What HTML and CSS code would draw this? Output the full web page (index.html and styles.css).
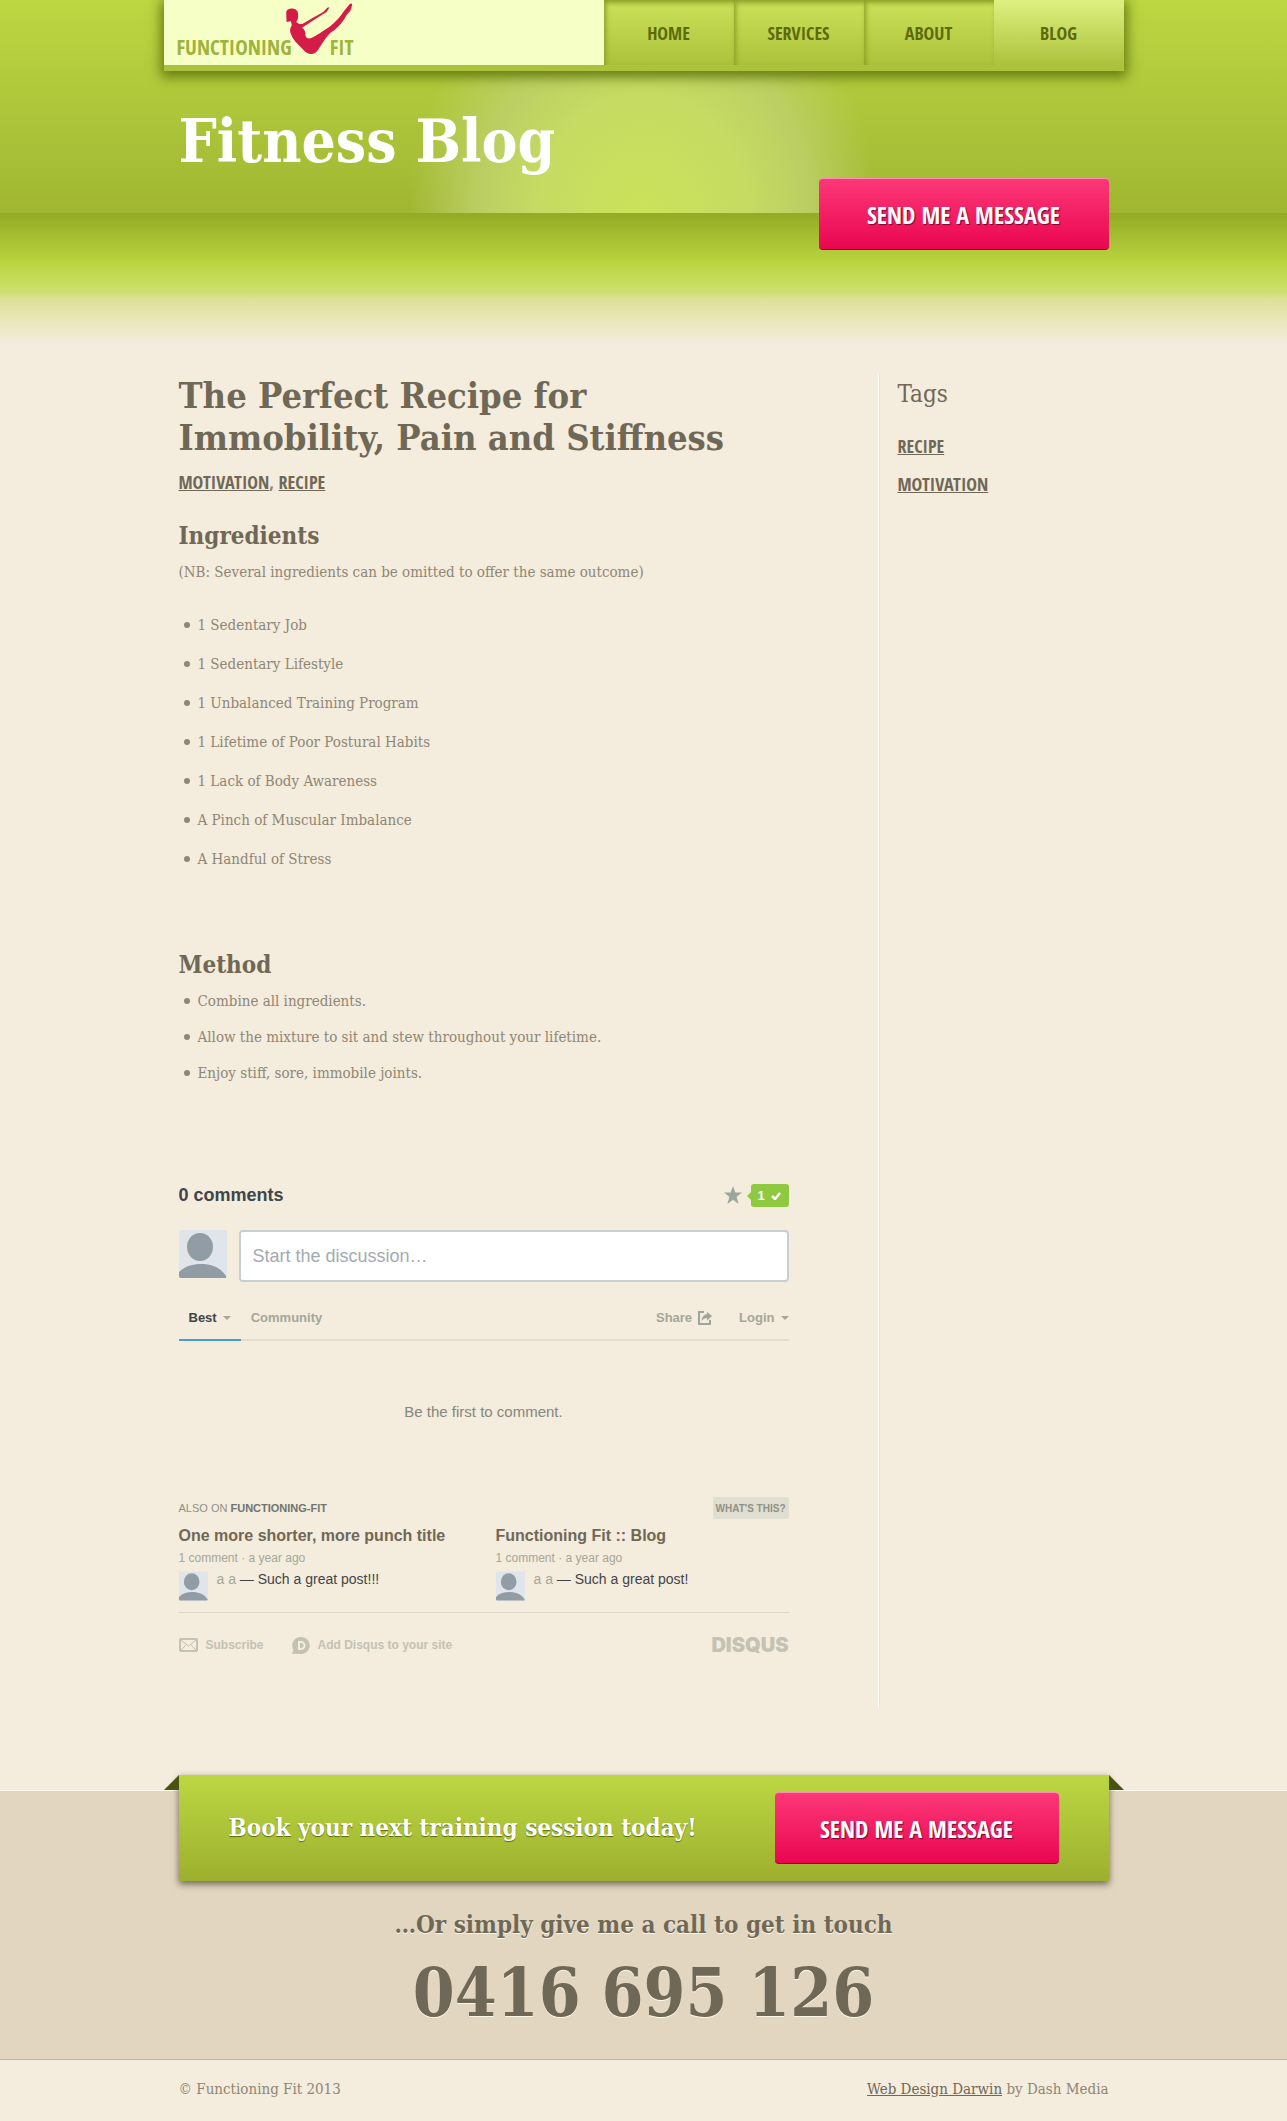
FILE: index.html
```
<!DOCTYPE html>
<html lang="en">
<head>
    <meta charset="UTF-8">
    <meta name="viewport" content="width=device-width, initial-scale=1.0">
    <title>Fitness Blog - Functioning Fit</title>
    <link rel="stylesheet" href="styles.css">
</head>
<body>
    <svg class="sprite" aria-hidden="true">
        <symbol id="avatar" viewBox="0 0 48 48">
            <rect width="48" height="48" rx="2" fill="#dfe5ea"/>
            <ellipse cx="21" cy="17" rx="13" ry="14" fill="#929ca5"/>
            <path d="M0 42C6 36 14 34 22 34c11 0 20 4 25 12v2H2a2 2 0 0 1-2-2z" fill="#929ca5"/>
        </symbol>
    </svg>

    <header class="header">
        <div class="topbar">
            <a class="logo" href="#">
                <span>FUNCTIONING</span>
                <svg class="logo-figure" viewBox="402 8 210 160" aria-hidden="true">
                    <path fill="#d51c49" d="M408 38C409 31 418 26 430 28c12 2 15 12 14 24l-1 8c-3 4-5 6-3 10 6 4 12 6 18 4l32-19 30-17 12-13 7-1-9 14-15 9-35 23-24 16c8 6 11 14 10 22 2 8 8 12 18 9 16-9 36-21 56-35 20-16 32-30 42-46l16-20c6-6 10-4 9 2l-5 16-12 14c-15 27-30 42-50 54-12 13-22 28-34 48-6 10-14 16-26 15-10-3-18-9-24-17-16-16-28-28-32-40-6-10-6-20 1-30l-3-12-13 2z"/>
                </svg>
                <span>FIT</span>
            </a>
            <nav class="nav">
                <a href="#">HOME</a>
                <a href="#">SERVICES</a>
                <a href="#">ABOUT</a>
                <a href="#" class="active">BLOG</a>
            </nav>
        </div>
        <div class="container hero">
            <h1>Fitness Blog</h1>
        </div>
    </header>

    <div class="fade">
        <div class="container fade-inner">
            <button type="button" class="btn">SEND ME A MESSAGE</button>
        </div>
    </div>

    <main class="container main">
        <article class="post">
            <h2>The Perfect Recipe for Immobility, Pain and Stiffness</h2>
            <p class="categories"><a href="#">MOTIVATION</a>, <a href="#">RECIPE</a></p>

            <h3>Ingredients</h3>
            <p>(NB: Several ingredients can be omitted to offer the same outcome)</p>
            <ul class="ingredients">
                <li>1 Sedentary Job</li>
                <li>1 Sedentary Lifestyle</li>
                <li>1 Unbalanced Training Program</li>
                <li>1 Lifetime of Poor Postural Habits</li>
                <li>1 Lack of Body Awareness</li>
                <li>A Pinch of Muscular Imbalance</li>
                <li>A Handful of Stress</li>
            </ul>

            <h3>Method</h3>
            <ul class="method">
                <li>Combine all ingredients.</li>
                <li>Allow the mixture to sit and stew throughout your lifetime.</li>
                <li>Enjoy stiff, sore, immobile joints.</li>
            </ul>

            <!-- Comments -->
            <section class="comments">
                <div class="comments-head">
                    <h4>0 comments</h4>
                    <div class="votes">
                        <svg width="18" height="18" viewBox="0 0 18 18" aria-hidden="true">
                            <path fill="#9ca69d" d="M9 0l2.300 6.600H18l-5.400 4.200L14.600 18 9 13.700 3.400 18l2-7.200L0 6.600h6.700z"/>
                        </svg>
                        <button type="button" class="vote-count">1
                            <svg width="10" height="8" viewBox="0 0 10 8" aria-hidden="true">
                                <path d="M1 4l3 3 5-6" fill="none" stroke="#fff" stroke-width="2.500"/>
                            </svg>
                        </button>
                    </div>
                </div>

                <form class="comment-form">
                    <svg width="48" height="48" aria-hidden="true"><use href="#avatar"/></svg>
                    <input type="text" id="comment" aria-label="Comment" placeholder="Start the discussion…">
                </form>

                <div class="tabs">
                    <a href="#" class="tab current">Best <i class="caret"></i></a>
                    <a href="#" class="tab">Community</a>
                    <a href="#" class="tab share">Share
                        <svg width="14" height="14" viewBox="0 0 14 14" aria-hidden="true">
                            <path d="M6 1H1v12h11V9" fill="none" stroke="#9ca69d" stroke-width="2"/>
                            <path d="M9 1l5 4-5 4.500V7C6.500 7 5 8 3.500 10 4 6 6 3.500 9 3.300z" fill="#9ca69d"/>
                        </svg>
                    </a>
                    <a href="#" class="tab login">Login <i class="caret"></i></a>
                </div>

                <p class="empty">Be the first to comment.</p>

                <div class="also-head">
                    <p>ALSO ON <b>FUNCTIONING-FIT</b></p>
                    <button type="button">WHAT'S THIS?</button>
                </div>
                <div class="also">
                    <div class="also-item">
                        <h5><a href="#">One more shorter, more punch title</a></h5>
                        <p class="meta">1 comment · a year ago</p>
                        <div class="quote">
                            <svg width="29" height="30" aria-hidden="true"><use href="#avatar"/></svg>
                            <p><span>a a</span> — Such a great post!!!</p>
                        </div>
                    </div>
                    <div class="also-item">
                        <h5><a href="#">Functioning Fit :: Blog</a></h5>
                        <p class="meta">1 comment · a year ago</p>
                        <div class="quote">
                            <svg width="29" height="30" aria-hidden="true"><use href="#avatar"/></svg>
                            <p><span>a a</span> — Such a great post!</p>
                        </div>
                    </div>
                </div>

                <div class="comments-foot">
                    <a href="#">
                        <svg width="19" height="14" viewBox="0 0 19 14" fill="none" stroke="#c3c2b3" aria-hidden="true">
                            <rect x="1" y="1" width="17" height="12" rx="1" stroke-width="2"/>
                            <path d="M2 2l7.500 6L17 2M2 12l5-5M17 12l-5-5" stroke-width="1"/>
                        </svg>
                        Subscribe
                    </a>
                    <a href="#">
                        <svg width="18" height="17" viewBox="0 0 18 17" aria-hidden="true">
                            <path fill="#c3c2b3" d="M9 0a8.500 8.500 0 1 1-2 16.700L0 17l1.500-4A8.500 8.500 0 0 1 9 0z"/>
                            <path d="M7 5h2a3.500 3.500 0 0 1 0 7H7z" fill="none" stroke="#f4ecdd" stroke-width="2"/>
                        </svg>
                        Add Disqus to your site
                    </a>
                    <a href="#" class="disqus">DISQUS</a>
                </div>
            </section>
        </article>

        <aside class="sidebar">
            <h3>Tags</h3>
            <ul>
                <li><a href="#">RECIPE</a></li>
                <li><a href="#">MOTIVATION</a></li>
            </ul>
        </aside>
    </main>

    <section class="contact">
        <div class="ribbon">
            <p>Book your next training session today!</p>
            <button type="button" class="btn">SEND ME A MESSAGE</button>
        </div>
        <p class="call">…Or simply give me a call to get in touch</p>
        <p class="phone">0416 695 126</p>
    </section>

    <footer class="footer">
        <div class="container footer-inner">
            <p>© Functioning Fit 2013</p>
            <p><a href="#">Web Design Darwin</a> by Dash Media</p>
        </div>
    </footer>
</body>
</html>
```

FILE: styles.css
```
* {
    box-sizing: border-box;
}
body {
    margin: 0;
    background-color: #f4ecdd;
    color: #8f8674;
    font-family: "DejaVu Serif Condensed", "DejaVu Serif", serif;
    font-size: 15px;
    line-height: 24px;
}
h1, h2, h3, h4, h5, p, ul {
    margin: 0;
}
ul {
    padding: 0;
    list-style: none;
}
a {
    color: inherit;
}
button {
    border: none;
    cursor: pointer;
}
.sprite {
    display: none;
}
.container {
    max-width: 930px;
    margin: 0 auto;
}

/* Header */
.header {
    background:
        radial-gradient(ellipse 235px 260px at 50% 100%, #cbe25a 0%, #c5db62 45%, rgba(190, 208, 104, 0.9) 70%, rgba(180, 200, 80, 0) 100%),
        linear-gradient(#bcd742, #a0b632);
}
.topbar {
    display: flex;
    max-width: 960px;
    margin: 0 auto;
    border-bottom: 6px solid #acc23c;
    background-color: #acc23c;
    box-shadow: 0 3px 12px 3px #66790f;
}
.logo {
    display: flex;
    flex: 1;
    align-items: flex-end;
    height: 65px;
    padding: 0 0 10px 13px;
    background-color: #f6ffc6;
    color: #9fb23b;
    font: bold 21px/16px "Open Sans Condensed", "Liberation Sans Narrow", sans-serif;
    text-decoration: none;
}
.logo-figure {
    width: 70px;
    height: 53px;
    margin: 0 -24px 0 -8px;
}
.nav {
    display: flex;
    width: 520px;
}
.nav a {
    flex: 1;
    height: 65px;
    background: linear-gradient(#cce25a, #acc23c);
    box-shadow: inset 2px 3px 5px #8ba025;
    color: #5c6a0c;
    font: bold 18px/66px "Open Sans Condensed", "Liberation Sans Narrow", sans-serif;
    text-align: center;
    text-decoration: none;
}
.nav .active {
    background: linear-gradient(#def080, #acc23c);
    box-shadow: none;
}
.hero {
    height: 142px;
    padding-top: 34px;
}
.hero h1 {
    color: #fff;
    font-size: 60px;
    line-height: 72px;
}
.fade {
    height: 132px;
    background: linear-gradient(#93aa24, #bcd742 40%, #cde070 60%, #dde096 65%, #e8e6b8 80%, #f4ecdf);
}
.fade-inner {
    display: flex;
    justify-content: flex-end;
}
.btn {
    width: 290px;
    height: 72px;
    border-top: 1px solid #ff8fb0;
    border-bottom: 1px solid #8c0a38;
    border-radius: 4px;
    background: linear-gradient(#fc3878, #e90650);
    color: #fff;
    font: bold 24px "Open Sans Condensed", "Liberation Sans Narrow", sans-serif;
    text-shadow: 1px 1px 1px #7a0730;
}
.fade .btn {
    margin-top: -35px;
}

/* Post */
.main {
    display: flex;
    justify-content: space-between;
    padding: 29px 0 83px;
}
.post {
    width: 610px;
    padding-bottom: 50px;
}
h2, h3 {
    color: #6f6856;
}
h2 {
    font-size: 36px;
    line-height: 42px;
}
h3 {
    margin-bottom: 8px;
    font-size: 24px;
    line-height: 32px;
}
.categories {
    margin: 12px 0 26px;
    font: 18px/24px "Open Sans Condensed", "Liberation Sans Narrow", sans-serif;
}
.categories a, .sidebar a {
    color: #6f6856;
    font-weight: bold;
}
.post li {
    position: relative;
    padding-left: 19px;
}
.post li::before {
    content: "";
    position: absolute;
    top: 9px;
    left: 5px;
    width: 6px;
    height: 6px;
    border-radius: 50%;
    background-color: #8f8674;
}
.ingredients {
    margin: 29px 0 78px;
}
.ingredients li {
    margin-bottom: 15px;
}
.method li {
    margin-bottom: 12px;
}

/* Comments */
.comments {
    margin-top: 98px;
    font-family: "Liberation Sans", Arial, sans-serif;
}
.comments-head, .comment-form, .tabs, .also-head, .comments-foot {
    display: flex;
    justify-content: space-between;
    align-items: center;
}
h4 {
    color: #3f4549;
    font-size: 18px;
}
.votes {
    display: flex;
    align-items: center;
    gap: 9px;
}
.vote-count {
    position: relative;
    width: 38px;
    height: 23px;
    padding: 0;
    border-radius: 3px;
    background-color: #8fc93f;
    color: #fff;
    font: bold 13px "Liberation Sans", Arial, sans-serif;
}
.vote-count svg {
    margin-left: 3px;
}
.vote-count::before {
    content: "";
    position: absolute;
    top: 8px;
    left: -4px;
    border: 4px solid transparent;
    border-left-width: 0;
    border-right-color: #8fc93f;
}
.comment-form {
    align-items: flex-start;
    gap: 12px;
    margin-top: 23px;
}
.comment-form input {
    flex: 1;
    height: 52px;
    padding: 0 12px;
    border: 2px solid #c7cfd3;
    border-radius: 4px;
    font: 18px "Liberation Sans", Arial, sans-serif;
}
.comment-form input::placeholder {
    color: #a5aab0;
}
.tabs {
    gap: 10px;
    margin-top: 12px;
    border-bottom: 2px solid #e2dccf;
}
.tab {
    display: flex;
    align-items: center;
    gap: 6px;
    height: 47px;
    margin-bottom: -2px;
    color: #a5a798;
    font-size: 13px;
    font-weight: bold;
    text-decoration: none;
}
.current {
    padding: 2px 10px 0;
    border-bottom: 2px solid #4a9bdc;
    color: #3f4549;
}
.share {
    margin: 0 17px -2px auto;
}
.caret {
    border: 4px solid transparent;
    border-top-color: #a5a798;
    border-bottom-width: 0;
}
.empty {
    margin: 59px 0 72px;
    color: #85877b;
    text-align: center;
}
.also-head {
    color: #8f9188;
    font-size: 11px;
}
.also-head b {
    color: #70756f;
}
.also-head button {
    height: 22px;
    padding: 0 3px;
    border-radius: 2px;
    background-color: #e0ded0;
    color: #8f9188;
    font: bold 10px "Liberation Sans", Arial, sans-serif;
}
.also {
    display: grid;
    grid-template-columns: 1fr 1fr;
    gap: 24px;
    padding: 4px 0 11px;
    border-bottom: 1px solid #dfd9cb;
}
h5 {
    color: #6f6856;
    font-size: 16px;
}
h5 a {
    text-decoration: none;
}
.meta {
    color: #a5a798;
    font-size: 12px;
    line-height: 20px;
}
.quote {
    display: flex;
    gap: 9px;
    padding-top: 3px;
    color: #3f4549;
    font-size: 14px;
    line-height: 16px;
}
.quote span {
    color: #a5a798;
}
.comments-foot {
    gap: 28px;
    margin-top: 20px;
    color: #c3c2b3;
    font-size: 12px;
    font-weight: bold;
}
.comments-foot a {
    display: flex;
    align-items: center;
    gap: 8px;
    text-decoration: none;
}
.comments-foot .disqus {
    margin-left: auto;
    font: 900 20px/24px "Inter", sans-serif;
}

/* Sidebar */
.sidebar {
    width: 231px;
    padding-left: 19px;
    border-left: 1px solid #fffdf6;
    box-shadow: inset 1px 0 #ebe3d3;
}
.sidebar h3 {
    margin: 4px 0 24px;
    font-size: 24px;
    font-weight: normal;
}
.sidebar li {
    margin-bottom: 14px;
    font: 18px/24px "Open Sans Condensed", "Liberation Sans Narrow", sans-serif;
}

/* Contact */
.contact {
    padding-bottom: 30px;
    border-top: 1px solid #fffaf0;
    border-bottom: 1px solid #c4b78b;
    background-color: #e2d6c0;
    color: #6f6856;
    text-align: center;
    text-shadow: 0 1px #fff8ea;
}
.ribbon {
    position: relative;
    display: flex;
    justify-content: space-between;
    align-items: center;
    max-width: 930px;
    height: 106px;
    margin: -16px auto 0;
    padding: 0 50px;
    background: linear-gradient(#bcd742, #9db02f);
    box-shadow: 0 3px 7px #6b6250;
    color: #fff;
    font-size: 24px;
    font-weight: bold;
    text-shadow: 0 1px 1px #5c6a0c;
}
.ribbon .btn {
    width: 284px;
}
/* folded ribbon ends */
.ribbon::before, .ribbon::after {
    content: "";
    position: absolute;
    top: 0;
    border-bottom: 15px solid #4a5311;
}
.ribbon::before {
    left: -15px;
    border-left: 15px solid transparent;
}
.ribbon::after {
    right: -15px;
    border-right: 15px solid transparent;
}
.call {
    margin-top: 28px;
    font-size: 24px;
    font-weight: bold;
    line-height: 32px;
}
.phone {
    margin-top: 16px;
    font-size: 67px;
    font-weight: bold;
    line-height: 72px;
}

/* Footer */
.footer-inner {
    display: flex;
    justify-content: space-between;
    padding: 17px 0 20px;
}
.footer a {
    color: #6f6856;
}
```
